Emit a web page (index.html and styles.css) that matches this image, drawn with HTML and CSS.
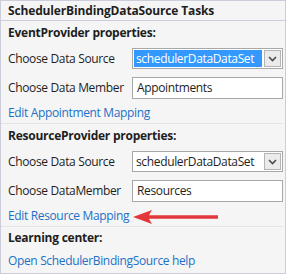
FILE: index.html
```html
<!DOCTYPE html>
<html>
<head>
<meta charset="utf-8">
<link rel="stylesheet" href="styles.css">
</head>
<body>
<div class="panel">
  <div class="title">SchedulerBindingDataSource Tasks</div>
  <div class="body">
    <div class="heading">EventProvider properties:</div>
    <div class="row first">
      <span class="label">Choose Data Source</span>
      <div class="combo selected"><span class="value">schedulerDataDataSet</span><span class="btn"><svg width="9" height="6" viewBox="0 0 9 6"><path d="M1 1 L4.5 4.5 L8 1" fill="none" stroke="#4a4a4a" stroke-width="1.6"/></svg></span></div>
    </div>
    <div class="row">
      <span class="label">Choose Data Member</span>
      <div class="textbox">Appointments</div>
    </div>
    <div class="linkrow"><span class="link">Edit Appointment Mapping</span></div>
    <div class="sep"></div>
    <div class="heading">ResourceProvider properties:</div>
    <div class="row first">
      <span class="label">Choose Data Source</span>
      <div class="combo"><span class="value">schedulerDataDataSet</span><span class="btn"><svg width="9" height="6" viewBox="0 0 9 6"><path d="M1 1 L4.5 4.5 L8 1" fill="none" stroke="#4a4a4a" stroke-width="1.6"/></svg></span></div>
    </div>
    <div class="row">
      <span class="label">Choose DataMember</span>
      <div class="textbox">Resources</div>
    </div>
    <div class="linkrow">
      <span class="link">Edit Resource Mapping</span>
      <svg class="arrow" width="87" height="16" viewBox="0 0 87 16"><path d="M1 8 L20 1 L17 6.3 L86 6.3 L86 9.7 L17 9.7 L20 15 Z" fill="#e3373b"/></svg>
    </div>
    <div class="sep"></div>
    <div class="heading third">Learning center:</div>
    <div class="linkrow last"><span class="link">Open SchedulerBindingSource help</span></div>
  </div>
</div>
</body>
</html>
```
FILE: styles.css
```css
html, body {
  margin: 0;
  padding: 0;
  background: #ffffff;
}
.panel {
  box-sizing: border-box;
  width: 286px;
  height: 274px;
  border: 1px solid #cbcddb;
  background: #f5f5f5;
  font-family: "Open Sans", "Noto Sans", sans-serif;
  font-size: 12px;
  letter-spacing: -0.35px;
  color: #1e1e1e;
  display: flex;
  flex-direction: column;
}
.title {
  height: 19px;
  line-height: 19px;
  padding-left: 7px;
  font-weight: bold;
  letter-spacing: -0.15px;
  border-bottom: 1px solid #cbcddb;
}
.body {
  padding: 0 2px 0 7px;
  display: flex;
  flex-direction: column;
}
.heading {
  font-weight: bold;
  letter-spacing: -0.25px;
  height: 20px;
  line-height: 20px;
  margin-top: 2px;
}
.heading.third {
  margin-top: 1px;
}
.row {
  height: 29px;
  display: flex;
  align-items: center;
}
.row.first {
  margin-top: 1px;
}
.label {
  width: 124px;
  flex: none;
  white-space: nowrap;
}
.combo {
  box-sizing: border-box;
  width: 151px;
  height: 21px;
  border: 1px solid #a8a8a8;
  background: #ffffff;
  display: flex;
  align-items: stretch;
}
.combo .value {
  flex: 1;
  padding-left: 3px;
  line-height: 19px;
  white-space: nowrap;
  overflow: hidden;
}
.combo.selected .value {
  background: #3399ff;
  color: #ffffff;
  margin: 1px 0 1px 1px;
  line-height: 17px;
  padding-left: 2px;
}
.combo .btn {
  width: 15px;
  margin: 1px 1px 1px 2px;
  border: 1px solid #b4b4b4;
  background: #ebebeb;
  display: flex;
  align-items: center;
  justify-content: center;
}
.textbox {
  box-sizing: border-box;
  width: 151px;
  height: 22px;
  border: 1px solid #a8a8a8;
  background: #ffffff;
  padding-left: 4px;
  line-height: 20px;
}
.linkrow {
  height: 21px;
  line-height: 21px;
  position: relative;
}
.link {
  color: #1c71c7;
}
.sep {
  height: 1px;
  background: #e3e3e8;
  margin: 0 0 0 -7px;
}
.arrow {
  position: absolute;
  left: 124px;
  top: 4px;
}
.linkrow.last {
  margin-top: 2px;
}
```
